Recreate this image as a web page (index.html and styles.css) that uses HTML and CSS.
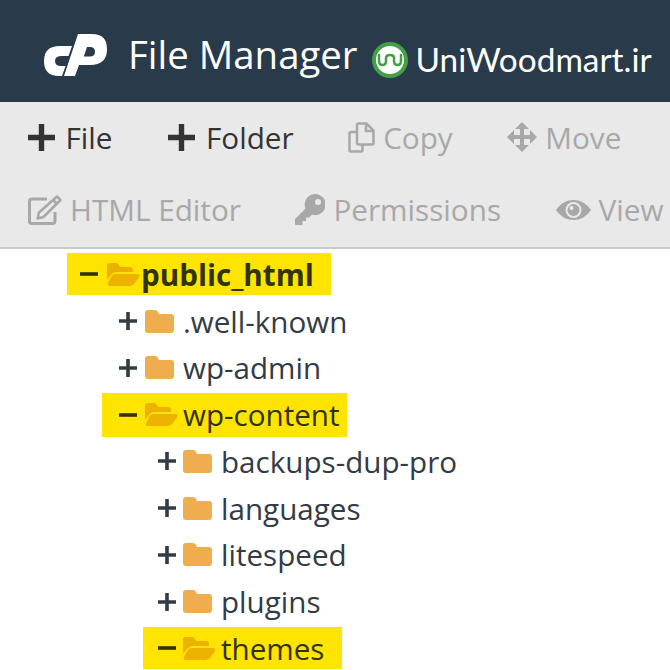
FILE: index.html
```html
<!DOCTYPE html>
<html>
  <head>
    <title>File Manager</title>
    <link rel="stylesheet" href="styles.css">
  </head>
  <body>
    <svg class="defs" width="0" height="0">
      <symbol id="i-folder" viewBox="0 0 29 23">
        <path d="M3 0h7q2 0 3 2l1 2h12q3 0 3 3v13q0 3-3 3H3q-3 0-3-3V3q0-3 3-3z"/>
      </symbol>
      <symbol id="i-open" viewBox="0 0 33 23">
        <path d="M0 3q0-3 3-3h6q2 0 3 2l1 2h10q3 0 3 3v2H9q-3 0-5 3l-4 5z"/>
        <path d="M8 11h22q3.5 0 2 3l-4 6q-2 3-5 3H3q-3.5 0-2-3l3-6q2-3 4-3z"/>
      </symbol>
      <symbol id="i-plus" viewBox="0 0 18 18">
        <path d="M7.2 0h3.6v7.2H18v3.6h-7.2V18H7.2v-7.2H0V7.2h7.2z"/>
      </symbol>
      <symbol id="i-minus" viewBox="0 0 18 18">
        <path d="M0 7.2h18v3.6H0z"/>
      </symbol>
    </svg>

    <header class="topbar">
      <svg class="cp-logo" viewBox="44 34 64 43" width="64" height="43">
        <path d="M72 46l-3.5 10H62q-7 0-7 5t6 5h4.500L62 76h-3Q44 76 44 61t16-15z"/>
        <path d="M78 34h14q15 0 15 15 0 16-17 16H79l-4 11H64zm9 13l-3.200 9.500H90q5 0 5-4.700T90 47z" fill-rule="evenodd"/>
      </svg>
      <h1 class="title">File Manager</h1>
      <svg class="uw-logo" viewBox="0 0 36 36" width="36" height="36">
        <circle cx="18" cy="18" r="16" fill="#fff" stroke="#43a047" stroke-width="4"/>
        <path d="M7 13v6q0 4 3.500 4t3.500-4v-3q0-3 4-3t4 3v3q0 4 3.500 4t3.500-4v-6" fill="none" stroke="#43a047" stroke-width="2.500" stroke-linecap="round"/>
      </svg>
      <span class="brand">UniWoodmart.ir</span>
    </header>

    <nav class="toolbar">
      <a class="tool add">
        <svg class="tool-icon" width="27" height="27"><use href="#i-plus"/></svg>File
      </a>
      <a class="tool add">
        <svg class="tool-icon" width="27" height="27"><use href="#i-plus"/></svg>Folder
      </a>
      <a class="tool off">
        <svg class="tool-icon" viewBox="0 0 27 31" width="27" height="31">
          <path d="M10.500 1.500h8l7 7V21q0 1.500-1.500 1.500H10.500Q9 22.500 9 21V3q0-1.500 1.500-1.500zM18 2v7h7M9 10H3q-1.500 0-1.500 1.500V28q0 1.500 1.500 1.500h10q1.500 0 1.500-1.500v-5.500" fill="none" stroke="currentColor" stroke-width="2.500"/>
        </svg>Copy
      </a>
      <a class="tool off">
        <svg class="tool-icon" viewBox="0 0 30 30" width="30" height="30">
          <path d="M15 0l7 7h-5v6h6V8l7 7-7 7v-5h-6v6h5l-7 7-7-7h5v-6H7v5l-7-7 7-7v5h6V7H8z"/>
        </svg>Move
      </a>
      <a class="tool off">
        <svg class="tool-icon" viewBox="0 0 34 30" width="34" height="30">
          <path d="M27 17v9q0 2.500-2.500 2.500H4Q1.500 28.500 1.500 26V6.500Q1.500 4 4 4h15" fill="none" stroke="currentColor" stroke-width="3"/>
          <path d="M29 1.500l3.500 3.500-17 17-6 1.500 1.500-6zM25 5l4 4" fill="none" stroke="currentColor" stroke-width="2.500" stroke-linejoin="round"/>
        </svg>HTML Editor
      </a>
      <a class="tool off">
        <svg class="tool-icon" viewBox="0 0 30 31" width="30" height="31">
          <path d="M20 0a10.500 10.500 0 1 1-3 20.500l-3 3h-3V27H7.500v4H1q-1 0-1-1v-5l10.500-10.500A10.500 10.500 0 0 1 20 0zm3 5a3 3 0 1 0 0 6 3 3 0 0 0 0-6z" fill-rule="evenodd"/>
        </svg>Permissions
      </a>
      <a class="tool off">
        <svg class="tool-icon" viewBox="0 0 35 20" width="35" height="20">
          <path d="M0 10C5 3 11 0 17.500 0S30 3 35 10c-5 7-11 10-17.500 10S5 17 0 10zm17.500-8a8 8 0 1 0 0 16 8 8 0 0 0 0-16zm0 2a6 6 0 1 1 0 12 6 6 0 0 1 0-12zm-2 2a2 2 0 1 0 0 4 2 2 0 0 0 0-4z" fill-rule="evenodd"/>
        </svg>View
      </a>
    </nav>

    <ul class="tree">
      <li class="row">
        <div class="entry lvl0 marked mark-root">
          <svg class="toggle" width="18" height="18"><use href="#i-minus"/></svg>
          <svg class="folder-open" width="33" height="23"><use href="#i-open"/></svg>
          <span class="name name-root">public_html</span>
        </div>
      </li>
      <li class="row">
        <div class="entry lvl1">
          <svg class="toggle" width="18" height="18"><use href="#i-plus"/></svg>
          <svg class="folder" width="29" height="23"><use href="#i-folder"/></svg>
          <span class="name">.well-known</span>
        </div>
      </li>
      <li class="row">
        <div class="entry lvl1">
          <svg class="toggle" width="18" height="18"><use href="#i-plus"/></svg>
          <svg class="folder" width="29" height="23"><use href="#i-folder"/></svg>
          <span class="name">wp-admin</span>
        </div>
      </li>
      <li class="row">
        <div class="entry lvl1 marked mark-content">
          <svg class="toggle" width="18" height="18"><use href="#i-minus"/></svg>
          <svg class="folder-open" width="33" height="23"><use href="#i-open"/></svg>
          <span class="name">wp-content</span>
        </div>
      </li>
      <li class="row">
        <div class="entry lvl2">
          <svg class="toggle" width="18" height="18"><use href="#i-plus"/></svg>
          <svg class="folder" width="29" height="23"><use href="#i-folder"/></svg>
          <span class="name">backups-dup-pro</span>
        </div>
      </li>
      <li class="row">
        <div class="entry lvl2">
          <svg class="toggle" width="18" height="18"><use href="#i-plus"/></svg>
          <svg class="folder" width="29" height="23"><use href="#i-folder"/></svg>
          <span class="name">languages</span>
        </div>
      </li>
      <li class="row">
        <div class="entry lvl2">
          <svg class="toggle" width="18" height="18"><use href="#i-plus"/></svg>
          <svg class="folder" width="29" height="23"><use href="#i-folder"/></svg>
          <span class="name">litespeed</span>
        </div>
      </li>
      <li class="row">
        <div class="entry lvl2">
          <svg class="toggle" width="18" height="18"><use href="#i-plus"/></svg>
          <svg class="folder" width="29" height="23"><use href="#i-folder"/></svg>
          <span class="name">plugins</span>
        </div>
      </li>
      <li class="row">
        <div class="entry lvl2 marked mark-themes">
          <svg class="toggle" width="18" height="18"><use href="#i-minus"/></svg>
          <svg class="folder-open" width="33" height="23"><use href="#i-open"/></svg>
          <span class="name">themes</span>
        </div>
      </li>
    </ul>
  </body>
</html>
```

FILE: styles.css
```css
html, body {
  margin: 0;
  height: 670px;
  overflow: hidden;
  background-color: #fff;
  font-family: "Open Sans", sans-serif;
}

.defs {
  position: absolute;
}

/* Top bar */
.topbar {
  display: flex;
  align-items: center;
  height: 102px;
  padding-left: 44px;
  background-color: #293a4a;
  color: #fff;
  white-space: nowrap;
}

.cp-logo {
  flex: none;
  margin-top: 8px;
  fill: #fff;
}

.title {
  margin: 6px 0 0 20px;
  font-size: 38.4px;
  font-weight: 400;
}

.uw-logo {
  flex: none;
  margin: 18px 0 0 14px;
}

.brand {
  margin: 16px 0 0 8px;
  font-family: "Lato", sans-serif;
  font-size: 33.4px;
}

/* Toolbar */
.toolbar {
  display: flex;
  flex-wrap: wrap;
  column-gap: 54.5px;
  box-sizing: border-box;
  height: 147px;
  padding-left: 28px;
  background-color: #e9e9e9;
  border-bottom: 2px solid #c9c9cb;
}

.tool {
  display: flex;
  align-items: center;
  gap: 8px;
  height: 72px;
  margin-top: -1px;
  font-size: 29.7px;
  color: #333;
  fill: #333;
}

.tool.add {
  gap: 10.5px;
}

.tool.add + .tool.add {
  margin-left: 1.5px;
}

.tool.off {
  color: #a8a8a8;
  fill: #a8a8a8;
}

.tool-icon {
  flex: none;
}

/* Folder tree */
.tree {
  margin: 0;
  padding: 2px 0 0;
  list-style: none;
}

.row {
  display: flex;
  align-items: center;
  height: 46.75px;
}

.entry {
  display: flex;
  align-items: center;
  height: 42px;
  fill: #333b44;
}

.lvl0 { margin-left: 80px; }
.lvl1 { margin-left: 119px; }
.lvl2 { margin-left: 158px; }

.toggle {
  flex: none;
  margin-right: 8px;
}

.lvl2 .toggle {
  margin-right: 7px;
}

.folder {
  flex: none;
  fill: #f0ad4e;
  margin-right: 9px;
}

.folder-open {
  flex: none;
  fill: #edb100;
  margin-right: 5px;
}

.name {
  font-size: 29.6px;
  color: #333b44;
}

.marked {
  background-color: #ffe400;
  fill: #33330a;
}

.marked .name {
  color: #33330a;
}

.mark-root {
  margin-left: 67px;
  padding: 0 17px 0 13px;
}

.mark-root .toggle {
  margin-right: 9px;
}

.mark-root .folder-open {
  margin-right: 1px;
}

.name-root {
  font-weight: 700;
}

.mark-content {
  height: 44px;
  margin-left: 102px;
  padding: 0 7px 0 17px;
}

.mark-themes {
  margin-left: 143px;
  padding: 0 18px 0 15px;
}
```
